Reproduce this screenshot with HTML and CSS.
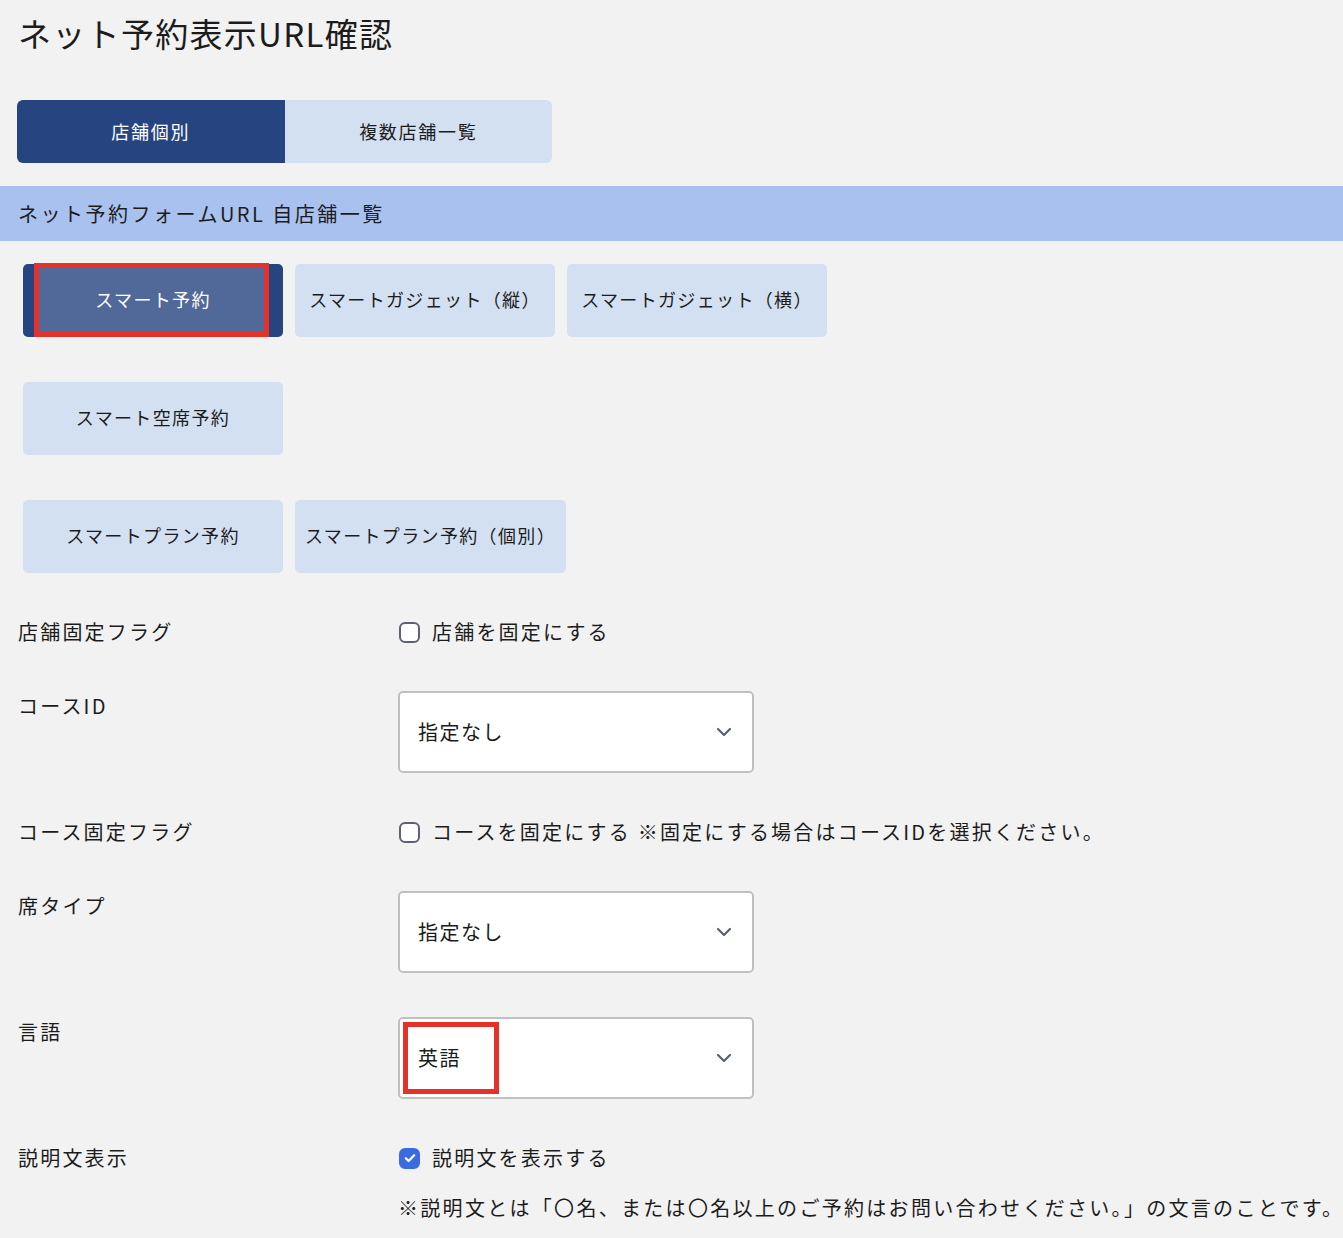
FILE: index.html
```html
<!DOCTYPE html>
<html lang="ja">
<head>
<meta charset="utf-8">
<title>ネット予約表示URL確認</title>
<link rel="stylesheet" href="styles.css">
</head>
<body>
<h1 class="title">ネット予約表示URL確認</h1>

<div class="tabs">
  <div class="tab tab-active">店舗個別</div>
  <div class="tab">複数店舗一覧</div>
</div>

<div class="section-head">ネット予約フォームURL 自店舗一覧</div>

<div class="btn-area">
  <div class="btn-row">
    <div class="btn btn-active">スマート予約<span class="mark mark-btn"></span></div>
    <div class="btn">スマートガジェット（縦）</div>
    <div class="btn">スマートガジェット（横）</div>
  </div>
  <div class="btn-row">
    <div class="btn">スマート空席予約</div>
  </div>
  <div class="btn-row">
    <div class="btn">スマートプラン予約</div>
    <div class="btn">スマートプラン予約（個別）</div>
  </div>
</div>

<div class="form">
  <div class="label">店舗固定フラグ</div>
  <div class="control">
    <label class="check"><span class="box"></span>店舗を固定にする</label>
  </div>

  <div class="label">コースID</div>
  <div class="control">
    <div class="select"><span class="select-text">指定なし</span><svg class="chev" width="16" height="10" viewBox="0 0 16 10"><path d="M2 2 L8 8 L14 2" fill="none" stroke="#5b6170" stroke-width="2.2" stroke-linecap="round" stroke-linejoin="round"/></svg></div>
  </div>

  <div class="label">コース固定フラグ</div>
  <div class="control">
    <label class="check"><span class="box"></span>コースを固定にする ※固定にする場合はコースIDを選択ください。</label>
  </div>

  <div class="label">席タイプ</div>
  <div class="control">
    <div class="select"><span class="select-text">指定なし</span><svg class="chev" width="16" height="10" viewBox="0 0 16 10"><path d="M2 2 L8 8 L14 2" fill="none" stroke="#5b6170" stroke-width="2.2" stroke-linecap="round" stroke-linejoin="round"/></svg></div>
  </div>

  <div class="label">言語</div>
  <div class="control">
    <div class="select"><span class="select-text">英語</span><svg class="chev" width="16" height="10" viewBox="0 0 16 10"><path d="M2 2 L8 8 L14 2" fill="none" stroke="#5b6170" stroke-width="2.2" stroke-linecap="round" stroke-linejoin="round"/></svg><span class="mark mark-select"></span></div>
  </div>

  <div class="label">説明文表示</div>
  <div class="control">
    <label class="check"><span class="box box-checked"><svg width="12" height="10" viewBox="0 0 12 10"><path d="M1.8 5.2 L4.6 8 L10.2 2.2" fill="none" stroke="#fff" stroke-width="2.2" stroke-linecap="round" stroke-linejoin="round"/></svg></span>説明文を表示する</label>
    <p class="note">※説明文とは「〇名、または〇名以上のご予約はお問い合わせください。」の文言のことです。</p>
  </div>
</div>
</body>
</html>
```

FILE: styles.css
```css
html, body {
  margin: 0;
  padding: 0;
}
body {
  background: #f2f2f2;
  color: #1c1c1c;
  font-family: "Noto Sans CJK JP", "Noto Sans", sans-serif;
  width: 1343px;
  min-height: 1238px;
  overflow: hidden;
}
.title {
  margin: 0;
  padding: 11px 18px 0;
  font-size: 33px;
  font-weight: 400;
  line-height: 44px;
  letter-spacing: 1.3px;
}
.tabs {
  display: flex;
  margin: 45px 0 0 17px;
  width: 535px;
  height: 63px;
  border-radius: 6px;
  overflow: hidden;
  background: #d3e0f2;
}
.tab {
  flex: 1;
  display: flex;
  align-items: center;
  justify-content: center;
  font-size: 18px;
  letter-spacing: 1.7px;
  color: #1c1c1c;
  padding-bottom: 2px;
}
.tab-active {
  background: #26447f;
  color: #fff;
}
.section-head {
  margin-top: 23px;
  height: 55px;
  line-height: 55px;
  background: #a9c1ee;
  padding-left: 18px;
  font-size: 20px;
  letter-spacing: 2.5px;
}
.btn-area {
  display: flex;
  flex-direction: column;
  gap: 45px;
  padding: 23px 23px 0;
}
.btn-row {
  display: flex;
  gap: 12px;
}
.btn {
  position: relative;
  min-width: 260px;
  height: 73px;
  box-sizing: border-box;
  padding: 0 10px 3px;
  display: flex;
  align-items: center;
  justify-content: center;
  background: #d3e0f2;
  border-radius: 5px;
  font-size: 18px;
  letter-spacing: 1.35px;
  color: #1c1c1c;
}
.btn-active {
  background: #26447f;
  color: #fff;
}
.mark {
  position: absolute;
  border: 5px solid #e4322b;
  box-sizing: border-box;
  pointer-events: none;
}
.mark-btn {
  left: 11px;
  top: -1px;
  width: 235px;
  height: 74px;
  background: rgba(255, 255, 255, 0.2);
}
.form {
  display: grid;
  grid-template-columns: 380px 1fr;
  row-gap: 44px;
  padding: 44px 0 0 18px;
}
.label {
  font-size: 20px;
  line-height: 30px;
  letter-spacing: 2.2px;
}
.control {
  font-size: 20px;
  line-height: 30px;
  letter-spacing: 2.2px;
}
.check {
  display: flex;
  align-items: center;
  gap: 12px;
  padding-left: 1px;
}
.box {
  width: 21px;
  height: 21px;
  box-sizing: border-box;
  border: 2px solid #5c6173;
  border-radius: 6px;
  background: #fff;
  display: flex;
  align-items: center;
  justify-content: center;
  flex: none;
}
.box-checked {
  background: #3a6be0;
  border-color: #3a6be0;
}
.select {
  position: relative;
  width: 356px;
  height: 82px;
  box-sizing: border-box;
  background: #fff;
  border: 2px solid #c0c0c0;
  border-radius: 5px;
  display: flex;
  align-items: center;
  justify-content: space-between;
  padding: 0 20px 0 18px;
  letter-spacing: 1.5px;
}
.select-text {
  color: #1c1c1c;
}
.chev {
  display: block;
}
.mark-select {
  left: 3px;
  top: 3px;
  width: 96px;
  height: 72px;
}
.note {
  margin: 20px 0 0;
  font-size: 20px;
  line-height: 30px;
  letter-spacing: 2.3px;
  white-space: nowrap;
}
```
